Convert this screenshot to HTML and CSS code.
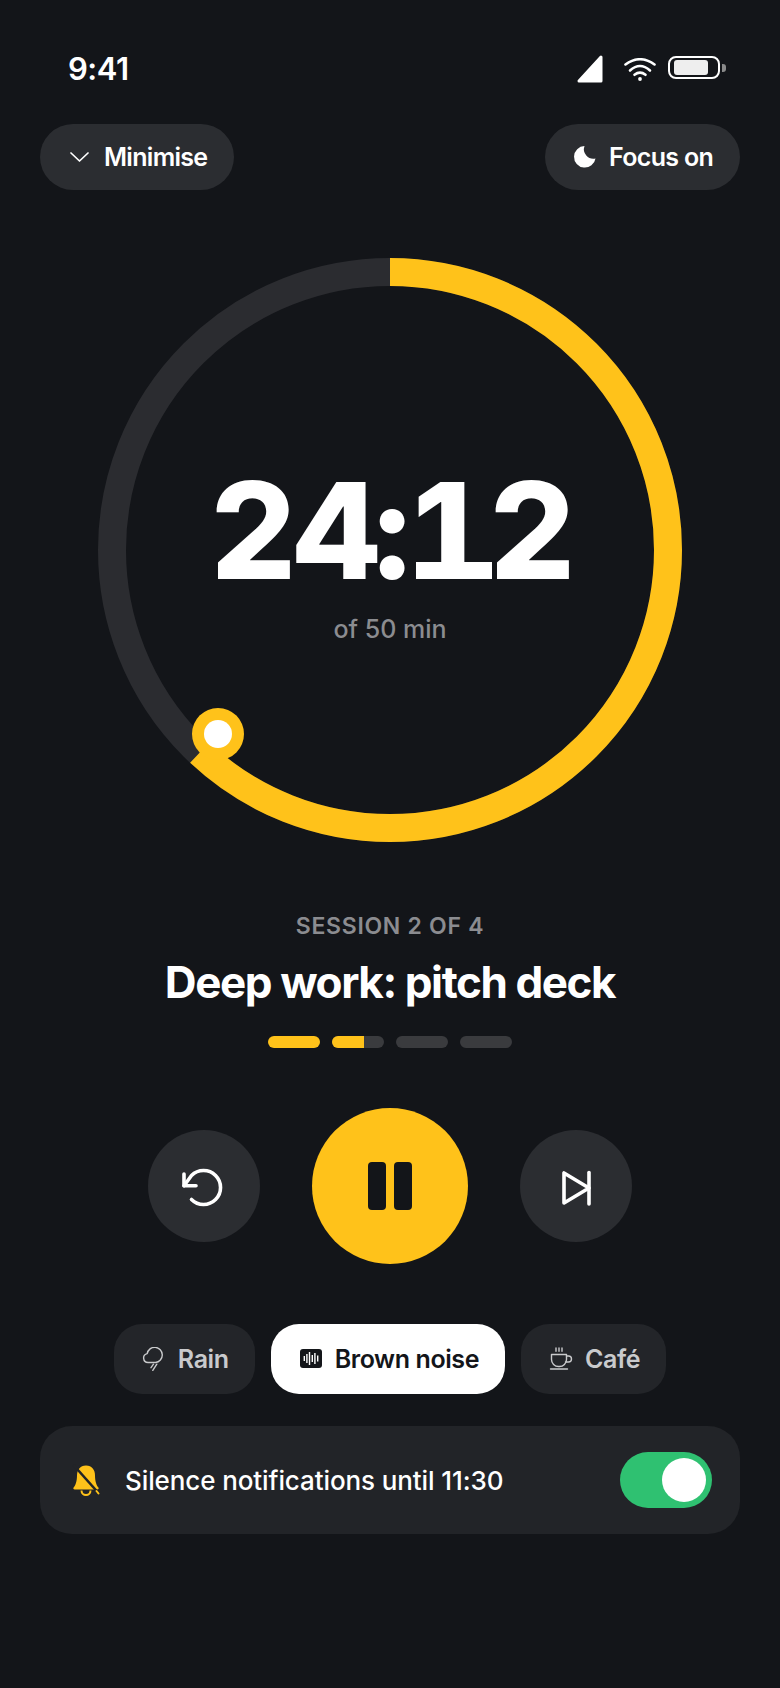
FILE: index.html
```html
<!DOCTYPE html>
<html lang="en">
<head>
<meta charset="utf-8">
<title>Focus timer</title>
<link rel="stylesheet" href="styles.css">
</head>
<body>
<main class="screen">
  <header class="status">
    <span class="clock">9:41</span>
    <div class="status-icons">
      <svg class="sig" width="26" height="28" viewBox="0 0 26 28"><path d="M24 2V26H2Z" fill="#fff" stroke="#fff" stroke-width="3" stroke-linejoin="round"/></svg>
      <svg class="wifi" width="32" height="24" viewBox="0 0 32 24" fill="none" stroke="#fff" stroke-width="2.600" stroke-linecap="round"><path d="M1.500 6.500Q16-4 30.500 6.500"/><path d="M6 12.500Q16 3.500 26 12.500"/><path d="M10.500 16.800Q16 12.500 21.500 16.800"/><circle cx="16" cy="21" r="1.900" fill="#fff" stroke="none"/></svg>
      <div class="battery"><div class="battery-fill"></div></div>
      <div class="battery-nub"></div>
    </div>
  </header>

  <nav class="top">
    <button class="pill">
      <svg width="24" height="24" viewBox="0 0 24 24" fill="none" stroke="#fff" stroke-width="1.700" stroke-linecap="round" stroke-linejoin="round"><path d="M3 8l8.500 8 8.500-8"/></svg>
      <span>Minimise</span>
    </button>
    <button class="pill">
      <svg width="24" height="24" viewBox="0 0 24 24"><path d="M11.500 1A10.800 10.800 0 1 0 22.500 13.500A9.500 9.500 0 0 1 11.500 1Z" fill="#fff"/></svg>
      <span>Focus on</span>
    </button>
  </nav>

  <section class="ring">
    <svg class="ring-svg" width="584" height="584" viewBox="0 0 584 584" fill="none">
      <circle cx="292" cy="292" r="278" stroke="#2b2c30" stroke-width="28"/>
      <circle cx="292" cy="292" r="278" stroke="#ffc21a" stroke-width="28" pathLength="100" stroke-dasharray="62 100" transform="rotate(-90 292 292)"/>
      <circle cx="120" cy="476" r="26" fill="#ffc21a"/>
      <circle cx="120" cy="476" r="14" fill="#fff"/>
    </svg>
    <div class="time">2<span class="four">4</span><span class="colon">:</span><span class="one">1</span>2</div>
    <div class="of">of 50 min</div>
  </section>

  <section class="session">
    <div class="label">SESSION 2 OF 4</div>
    <h1 class="title">Deep work: pitch deck</h1>
    <div class="segs">
      <div class="seg"><div class="seg-fill full"></div></div>
      <div class="seg"><div class="seg-fill part"></div></div>
      <div class="seg"></div>
      <div class="seg"></div>
    </div>
  </section>

  <section class="controls">
    <button class="round">
      <svg width="48" height="48" viewBox="0 0 48 48" fill="none" stroke="#fff" stroke-width="3.600" stroke-linecap="round" stroke-linejoin="round"><path d="M11.500 37.500A17 17 0 1 0 11.500 13.500L4 23.700"/><path d="M4 12V23.700H16"/></svg>
    </button>
    <button class="round play">
      <span class="bar"></span><span class="bar"></span>
    </button>
    <button class="round">
      <svg width="48" height="48" viewBox="0 0 48 48" fill="none" stroke="#fff" stroke-width="3.600" stroke-linecap="round" stroke-linejoin="round"><path d="M12 11V41L37 26Z"/><path d="M37 10.500V42"/></svg>
    </button>
  </section>

  <section class="chips">
    <button class="chip">
      <svg width="24" height="24" viewBox="0 0 24 24" fill="none" stroke="#c9cacc" stroke-width="1.400" stroke-linecap="round" stroke-linejoin="round"><path d="M6 15.500A4.500 4.500 0 0 1 5.200 6.600A7.600 7.600 0 1 1 13.500 15.500Z"/><path d="M11.500 17.200L9 20.700"/><path d="M14.800 17.200L10.800 23.400"/></svg>
      <span>Rain</span>
    </button>
    <button class="chip on">
      <svg width="24" height="24" viewBox="0 0 24 24"><rect x="1" y="2" width="22" height="19" rx="3" fill="#14161a"/><g fill="#fff"><rect x="4.600" y="9" width="1.400" height="5"/><rect x="7.200" y="7" width="1.400" height="9"/><rect x="9.800" y="5" width="1.400" height="13"/><rect x="12.600" y="8" width="1.400" height="7"/><rect x="15.200" y="6" width="1.400" height="11"/><rect x="18" y="8.500" width="1.400" height="6"/></g></svg>
      <span>Brown noise</span>
    </button>
    <button class="chip">
      <svg width="24" height="24" viewBox="0 0 24 24" fill="none" stroke="#c9cacc" stroke-width="1.400" stroke-linecap="round" stroke-linejoin="round"><path d="M2.500 7.500H17.500V12.500A7 7 0 0 1 10.500 19.500H9.500A7 7 0 0 1 2.500 12.500Z"/><path d="M17.500 9H19.500A3 3 0 0 1 19.500 15H16.500"/><path d="M1.500 22H18.500"/><path d="M7 1V4.200M10 1V4.200M13 1V4.200"/></svg>
      <span>Café</span>
    </button>
  </section>

  <section class="card">
    <svg class="bell" width="28" height="32" viewBox="0 0 28 32"><path d="M14 1.500C8 1.500 5 6 5 11.500C5 17 3.500 21.500 1.800 23.200C.8 24.200 1.400 25.500 2.800 25.500H25.200C26.600 25.500 27.200 24.200 26.200 23.200C24.500 21.500 23 17 23 11.500C23 6 20 1.500 14 1.500Z" fill="#ffc21a"/><path d="M9.500 26.500A4.500 4.500 0 0 0 18.500 26.500" fill="none" stroke="#ffc21a" stroke-width="2"/><path d="M1.500 1L26 28.500" stroke="#222428" stroke-width="2.600"/><path d="M24.500 27L26.500 29.500" stroke="#ffc21a" stroke-width="2" stroke-linecap="round"/></svg>
    <span class="card-text">Silence notifications until 11:30</span>
    <div class="toggle"><div class="toggle-knob"></div></div>
  </section>
</main>
</body>
</html>
```
FILE: styles.css
```css
* { box-sizing: border-box; margin: 0; padding: 0; }
html, body { background: #131519; }
body { width: 780px; height: 1688px; overflow: hidden; font-family: "Inter", "Liberation Sans", sans-serif; color: #fff; }
button { font: inherit; color: inherit; border: 0; }
.screen { display: flex; flex-direction: column; align-items: center; width: 780px; height: 1688px; }

.status { width: 100%; height: 124px; padding: 47px 54px 0 68px; display: flex; justify-content: space-between; align-items: flex-start; }
.clock { font-size: 31px; line-height: 44px; font-weight: 600; letter-spacing: -0.5px; }
.status-icons { display: flex; align-items: flex-start; margin-top: 8px; }
.sig { margin-right: 21px; }
.wifi { margin-top: 3px; margin-right: 12px; }
.battery { width: 52px; height: 23px; margin-top: 1px; border: 2px solid #fff; border-radius: 8px; padding: 2px 10px 2px 4px; }
.battery-fill { height: 100%; background: #eeeeee; border-radius: 3px; }
.battery-nub { width: 4px; height: 8px; margin: 8.500px 0 0 2px; background: #8a8a8a; border-radius: 0 3px 3px 0; }

.top { width: 100%; padding: 0 40px; display: flex; justify-content: space-between; }
.pill { height: 66px; padding: 0 27px 0 28px; display: flex; align-items: center; gap: 12px; border-radius: 33px; background: #2b2d31; font-size: 25px; font-weight: 600; letter-spacing: -0.7px; }

.ring { position: relative; width: 584px; height: 584px; margin-top: 68px; display: flex; flex-direction: column; align-items: center; padding-top: 186px; }
.ring-svg { position: absolute; left: 0; top: 0; }
.time { position: relative; font-weight: 800; font-size: 134px; line-height: 170px; letter-spacing: -6px; margin-top: 1px; margin-bottom: -1px; }
.four { letter-spacing: -14px; }
.colon { letter-spacing: -3px; }
.one { position: relative; letter-spacing: 18px; }
.one::after { content: ""; position: absolute; left: 3px; width: 76px; bottom: 32px; height: 17px; background: #fff; }
.of { position: relative; margin-top: -2px; font-size: 25px; line-height: 34px; font-weight: 500; color: #8b8c90; letter-spacing: 0; }

.session { margin-top: 68px; display: flex; flex-direction: column; align-items: center; }
.label { font-size: 23px; line-height: 32px; font-weight: 600; letter-spacing: 0.7px; color: #8b8c90; }
.title { font-size: 44px; line-height: 56px; font-weight: 650; letter-spacing: -1.400px; margin-top: 12px; }
.segs { display: flex; gap: 12px; margin-top: 26px; }
.seg { width: 52px; height: 12px; border-radius: 6px; background: #3a3b3e; overflow: hidden; }
.seg-fill { height: 100%; background: #ffc21a; }
.seg-fill.full { width: 100%; }
.seg-fill.part { width: 62%; }

.controls { display: flex; align-items: center; gap: 52px; margin-top: 60px; }
.round { width: 112px; height: 112px; border-radius: 50%; background: #2b2d31; display: flex; align-items: center; justify-content: center; }
.round.play { width: 156px; height: 156px; background: #ffc21a; gap: 8px; }
.bar { width: 18px; height: 48px; border-radius: 4px; background: #131519; }

.chips { display: flex; gap: 16px; margin-top: 60px; }
.chip { height: 70px; padding: 0 26px 0 28px; display: flex; align-items: center; gap: 12px; border-radius: 28px; background: #232529; color: #c9cacc; font-size: 25px; font-weight: 600; letter-spacing: -0.4px; }
.chip.on { background: #fff; color: #131519; }

.card { width: 700px; height: 108px; margin-top: 32px; padding: 0 28px 0 32px; display: flex; align-items: center; border-radius: 32px; background: #222428; }
.bell { flex: none; }
.card-text { flex: 1; margin-left: 25px; font-size: 26px; font-weight: 500; letter-spacing: -0.1px; }
.toggle { width: 92px; height: 56px; padding: 6px; border-radius: 28px; background: #2fc171; display: flex; justify-content: flex-end; }
.toggle-knob { width: 44px; height: 44px; border-radius: 50%; background: #fff; }
```
